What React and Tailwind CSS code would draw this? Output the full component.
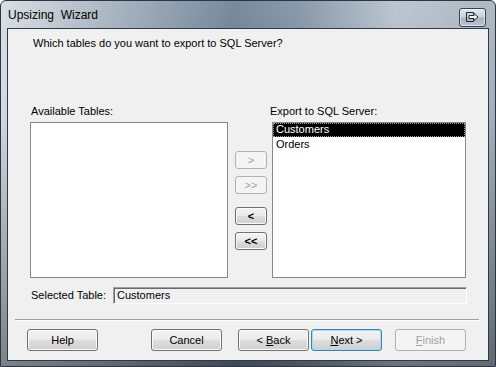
import React from 'react'

const font = { fontFamily: '"Liberation Sans", Arial, sans-serif' }

const WinButton = ({ children, className = '', disabled = false, focused = false }) => {
  let look = 'border-[#707070] bg-[linear-gradient(180deg,#f2f2f2_0%,#ebebeb_48%,#dddddd_52%,#cfcfcf_100%)] shadow-[inset_0_0_0_1px_#fbfbfb] text-black'
  if (disabled) look = 'border-[#adb2b5] bg-[#f4f4f4] text-[#a0a0a0]'
  if (focused) look = 'border-[#3c7fb1] bg-[linear-gradient(180deg,#f2f2f2_0%,#ebebeb_48%,#dddddd_52%,#cfcfcf_100%)] shadow-[inset_0_0_0_1px_#9fe0f9] text-black'
  return (
    <div className={`flex items-center justify-center border rounded-[3px] text-[11px] leading-none ${look} ${className}`}>
      {children}
    </div>
  )
}

const ListBox = ({ className = '', children }) => (
  <div className={`bg-white border border-[#828790] ${className}`}>{children}</div>
)

export default function App() {
  return (
    <div
      className="w-[496px] h-[367px] flex flex-col rounded-t-[6px] border border-[#2c3641] bg-[linear-gradient(180deg,rgba(255,255,255,0.12)_0%,rgba(0,0,0,0)_30%,rgba(0,0,0,0.4)_100%),linear-gradient(90deg,#d3dae1_0%,#aab5c1_18%,#667b8f_47%,#7a8c9e_60%,#b4bec9_80%,#a3afbb_100%)]"
      style={font}
    >
      {/* Title bar */}
      <div className="h-[27px] flex items-center pl-[7px] pr-[9px]">
        <span className="text-[12px] text-black whitespace-pre mt-[1px]">Upsizing  Wizard</span>
        <div className="ml-auto mt-[5px] w-[27px] h-[19px] rounded-[3px] border border-[#34414e] bg-[linear-gradient(180deg,#e3e7eb_0%,#c9d0d7_48%,#a9b4bf_52%,#b9c3cc_100%)] shadow-[inset_0_0_0_1px_rgba(255,255,255,0.5)] flex items-center justify-center">
          <svg width="13" height="10" viewBox="0 0 13 10">
            <path d="M7.5 2.5 V0.5 H0.5 V9.5 H7.5 V7.5" fill="none" stroke="#1f2a35" strokeWidth="1" />
            <path d="M3 3.5 H8 V1.5 L12 5 L8 8.5 V6.5 H3 Z" fill="#f4f6f8" stroke="#1f2a35" strokeWidth="1" strokeLinejoin="round" />
          </svg>
        </div>
      </div>

      {/* Client area */}
      <div className="ml-[6px] w-[482px] h-[333px] border border-[#2e3a46] bg-[#f0f0f0] text-[11px] text-black flex flex-col">
        <p className="mt-[7px] pl-[25px] h-[14px] leading-[14px]">Which tables do you want to export to SQL Server?</p>

        <div className="mt-[54px] h-[14px] leading-[14px] flex">
          <span className="ml-[23px] w-[239px]">Available Tables:</span>
          <span>Export to SQL Server:</span>
        </div>

        <div className="mt-[4px] h-[156px] flex">
          <ListBox className="ml-[22px] w-[198px] h-full" />
          <div className="ml-[7px] w-[32px] flex flex-col">
            <WinButton disabled className="mt-[29px] h-[18px] text-[9px]">&gt;</WinButton>
            <WinButton disabled className="mt-[7px] h-[18px] text-[9px]">&gt;&gt;</WinButton>
            <WinButton className="mt-[13px] h-[18px] text-[10px] font-bold">&lt;</WinButton>
            <WinButton className="mt-[7px] h-[18px] text-[10px] font-bold">&lt;&lt;</WinButton>
          </div>
          <ListBox className="ml-[5px] w-[194px] h-full">
            <div className="h-[14px] leading-[13px] bg-black text-white pl-[3px] outline-1 outline-dotted outline-[#9a9a9a] -outline-offset-1">Customers</div>
            <div className="h-[14px] leading-[14px] pl-[3px]">Orders</div>
          </ListBox>
        </div>

        <div className="mt-[9px] h-[17px] flex items-center">
          <span className="ml-[23px] w-[82px]">Selected Table:</span>
          <div className="w-[354px] h-full border border-[#a0a0a0] border-b-white border-r-white shadow-[inset_1px_1px_0_#696969] pl-[3px] leading-[15px]">Customers</div>
        </div>

        <div className="mt-[15px] ml-[7px] w-[464px] h-[2px] border-t border-[#a0a0a0] border-b border-b-white" />

        <div className="mt-[8px] h-[22px] flex">
          <WinButton className="ml-[19px] w-[71px] h-full">Help</WinButton>
          <WinButton className="ml-[53px] w-[71px] h-full">Cancel</WinButton>
          <WinButton className="ml-[16px] w-[71px] h-full">
            <span>&lt; <span className="underline">B</span>ack</span>
          </WinButton>
          <WinButton focused className="ml-[2px] w-[71px] h-full">
            <span><span className="underline">N</span>ext &gt;</span>
          </WinButton>
          <WinButton disabled className="ml-[13px] w-[71px] h-full">
            <span><span className="underline">F</span>inish</span>
          </WinButton>
        </div>
      </div>
    </div>
  )
}
